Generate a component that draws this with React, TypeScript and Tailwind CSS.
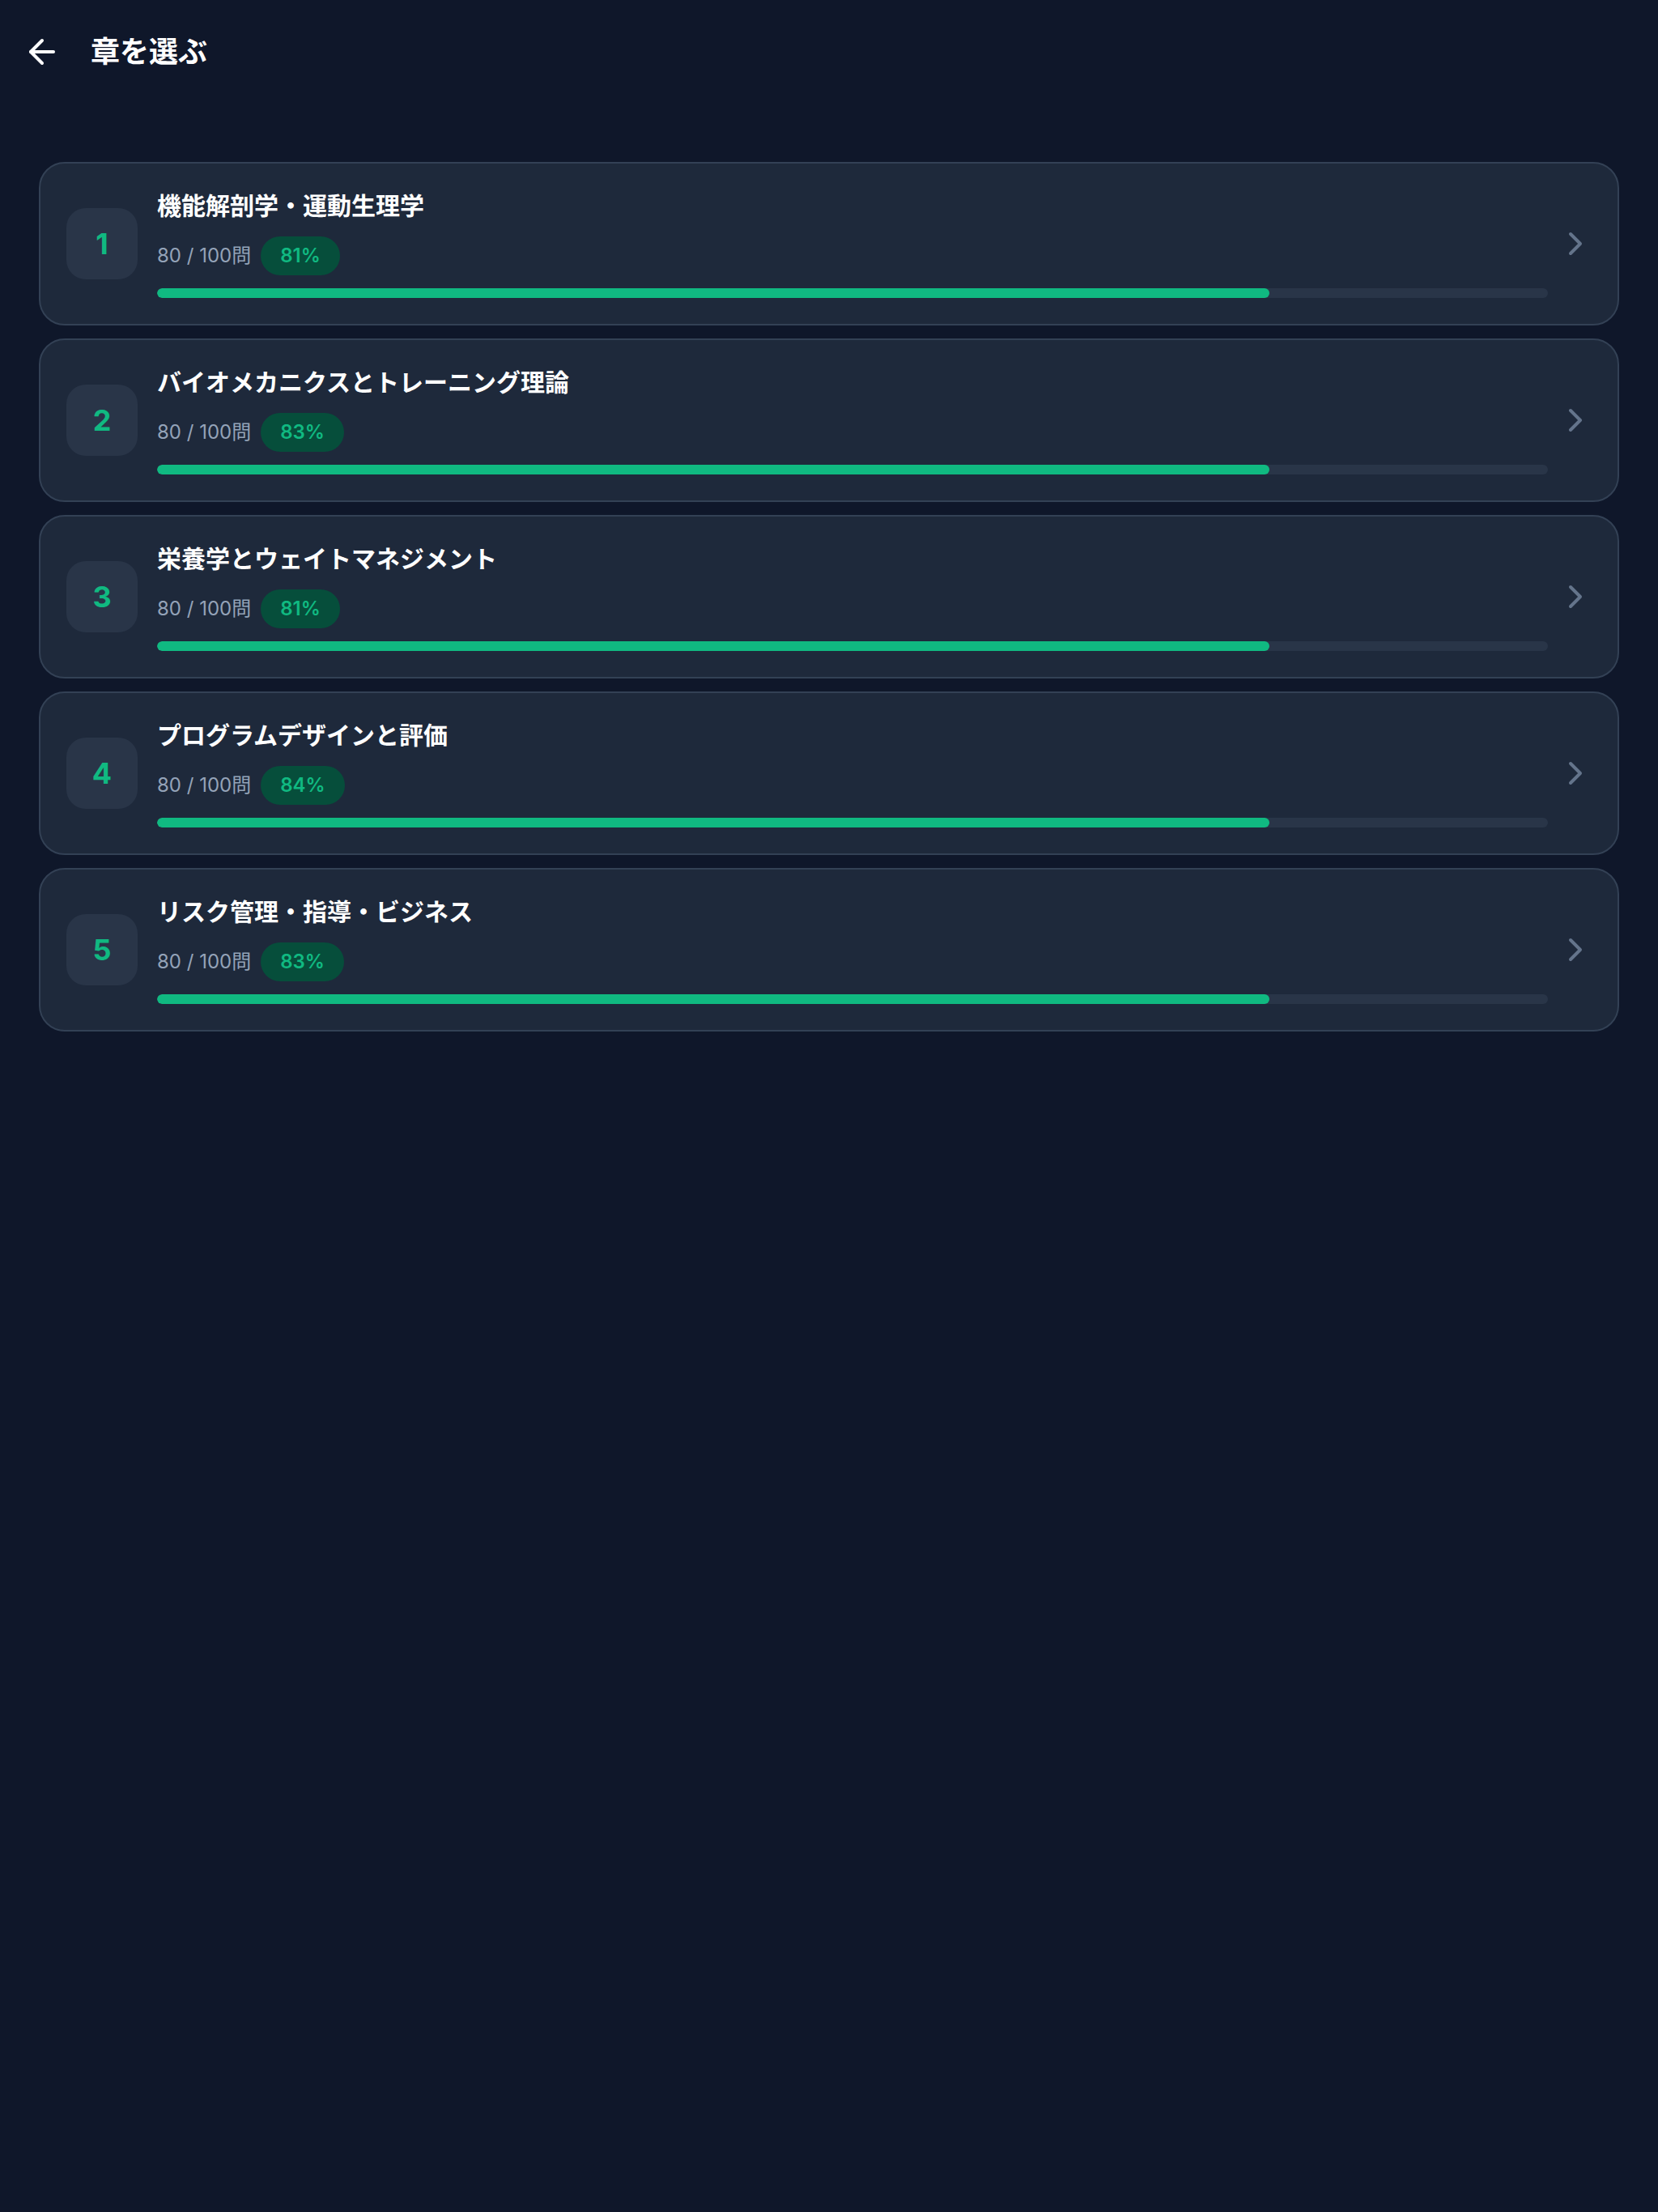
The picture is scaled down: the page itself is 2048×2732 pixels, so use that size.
import { ArrowLeft, ChevronRight } from 'lucide-react';

type Chapter = {
  id: number;
  title: string;
  answered: number;
  total: number;
  accuracy: number;
};

const chapters: Chapter[] = [
  { id: 1, title: '機能解剖学・運動生理学', answered: 80, total: 100, accuracy: 81 },
  { id: 2, title: 'バイオメカニクスとトレーニング理論', answered: 80, total: 100, accuracy: 83 },
  { id: 3, title: '栄養学とウェイトマネジメント', answered: 80, total: 100, accuracy: 81 },
  { id: 4, title: 'プログラムデザインと評価', answered: 80, total: 100, accuracy: 84 },
  { id: 5, title: 'リスク管理・指導・ビジネス', answered: 80, total: 100, accuracy: 83 },
];

export default function App() {
  return (
    <div
      className="min-h-screen bg-[#0f172a] text-white"
      style={{ fontFamily: 'Inter, "Noto Sans CJK JP", "Noto Sans", sans-serif' }}
    >
      {/* Header */}
      <header className="flex h-[128px] items-center gap-[36px] pl-[28px]">
        <button className="flex h-[48px] w-[48px] items-center justify-center text-white">
          <ArrowLeft size={48} strokeWidth={2} />
        </button>
        <h1 className="text-[36px] font-bold leading-none">章を選ぶ</h1>
      </header>

      {/* Chapter list */}
      <main className="flex flex-col gap-[16px] px-[48px] pt-[72px]">
        {chapters.map((chapter) => (
          <ChapterCard key={chapter.id} chapter={chapter} />
        ))}
      </main>
    </div>
  );
}

function ChapterCard({ chapter }: { chapter: Chapter }) {
  const progress = (chapter.answered / chapter.total) * 100;
  return (
    <button className="flex w-full items-center rounded-[32px] border-2 border-[#334155] bg-[#1e293b] py-[32px] pl-[32px] pr-[28px] text-left">
      <div className="flex h-[88px] w-[88px] shrink-0 items-center justify-center rounded-[24px] bg-[#293548] text-[36px] font-bold text-[#10b981]">
        {chapter.id}
      </div>

      <div className="ml-[24px] flex min-w-0 flex-1 flex-col">
        <span className="text-[30px] font-bold leading-[40px] text-white">
          {chapter.title}
        </span>
        <div className="mt-[18px] flex h-[48px] items-center gap-[12px]">
          <span className="text-[24px] text-[#94a3b8]">
            {chapter.answered} / {chapter.total}問
          </span>
          <span className="flex h-[48px] items-center rounded-full bg-[#064e3b] px-[24px] text-[24px] font-semibold text-[#10b981]">
            {chapter.accuracy}%
          </span>
        </div>
        <div className="mt-[16px] h-[12px] w-full overflow-hidden rounded-full bg-[#293548]">
          <div
            className="h-full rounded-full bg-[#10b981]"
            style={{ width: `${progress}%` }}
          />
        </div>
      </div>

      <div className="ml-[10px] flex h-[48px] w-[48px] shrink-0 items-center justify-center text-[#64748b]">
        <ChevronRight size={48} strokeWidth={2} />
      </div>
    </button>
  );
}
